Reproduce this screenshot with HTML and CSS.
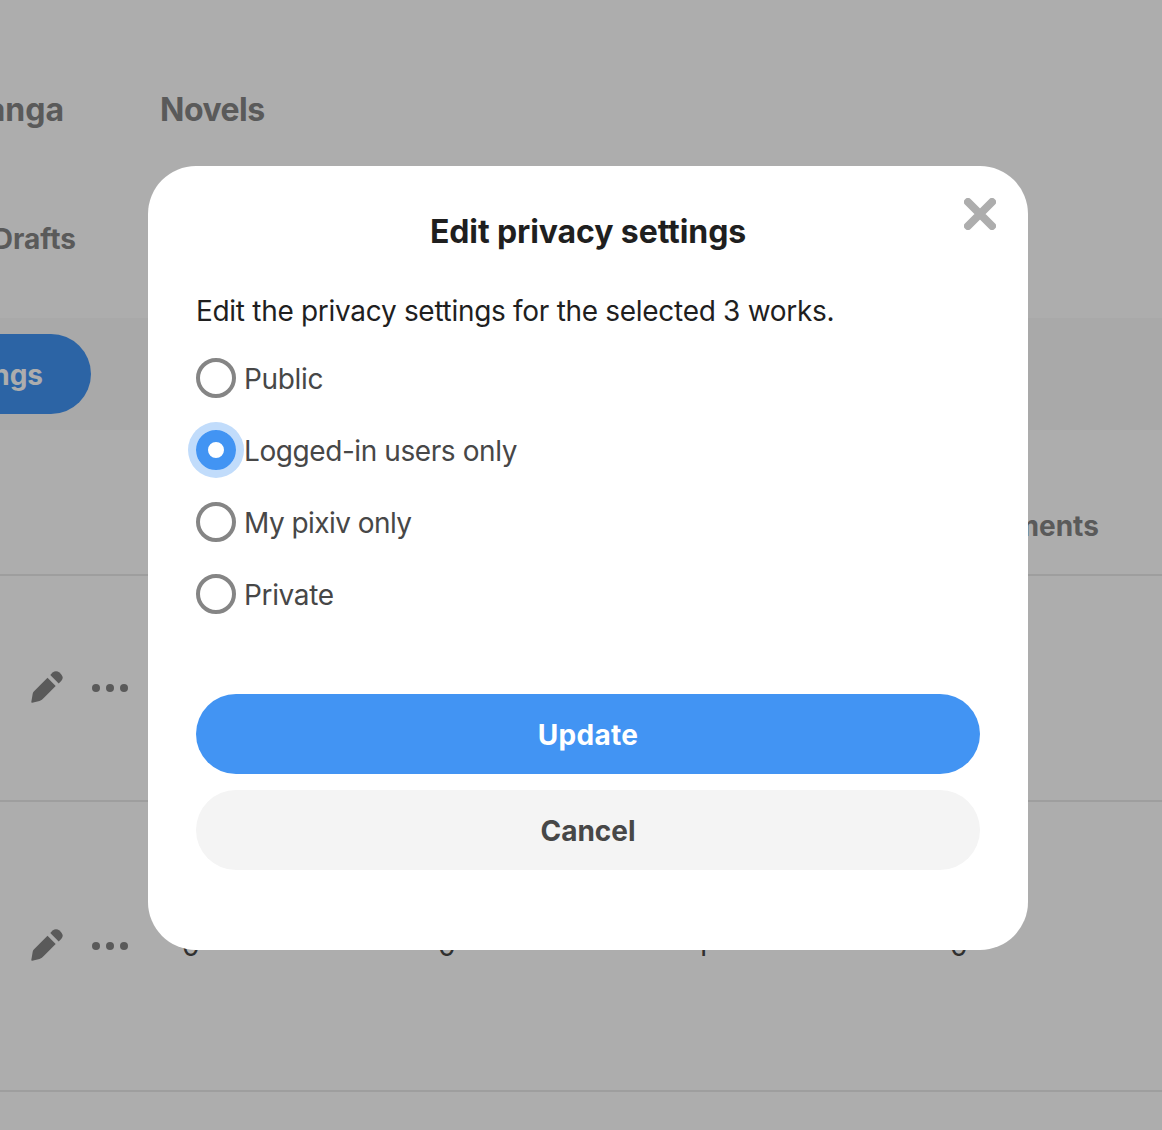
FILE: index.html
```html
<!DOCTYPE html>
<html lang="en">
<head>
    <meta charset="UTF-8">
    <meta name="viewport" content="width=device-width, initial-scale=1.0">
    <title>Edit privacy settings</title>
    <link rel="stylesheet" href="styles.css">
</head>
<body>
    <div class="page">
        <nav class="tabs">
            <a class="tab tab-first">Manga</a>
            <a class="tab tab-novels">Novels</a>
        </nav>
        <div class="filters"><a class="drafts">Drafts</a></div>
        <div class="toolbar">
            <button class="settings-button">Privacy settings</button>
        </div>

        <div class="row row-head">
            <div class="actions"></div>
            <div class="cell"></div>
            <div class="cell"></div>
            <div class="cell"></div>
            <div class="cell comments">Comments</div>
        </div>
        <div class="row row-first">
            <div class="actions">
                <svg class="pencil" viewBox="0 0 32 32">
                    <path d="M16.5 6.7 24.7 15 13 26.8Q11 29 8.5 30L1.2 31.8Q.3 32 .3 31L1.7 22.8Q1.9 21.5 2.8 20.6Z"/>
                    <path d="M19.3 4 21.6 1.6Q25-1.3 28.5 1.6L30.3 3.5Q33.2 7 30.2 10L27.7 12.4Z"/>
                </svg>
                <svg class="dots" viewBox="0 0 36 8"><circle cx="4" cy="4" r="4"/><circle cx="18" cy="4" r="4"/><circle cx="32" cy="4" r="4"/></svg>
            </div>
        </div>
        <div class="row row-second">
            <div class="actions">
                <svg class="pencil" viewBox="0 0 32 32">
                    <path d="M16.5 6.7 24.7 15 13 26.8Q11 29 8.5 30L1.2 31.8Q.3 32 .3 31L1.7 22.8Q1.9 21.5 2.8 20.6Z"/>
                    <path d="M19.3 4 21.6 1.6Q25-1.3 28.5 1.6L30.3 3.5Q33.2 7 30.2 10L27.7 12.4Z"/>
                </svg>
                <svg class="dots" viewBox="0 0 36 8"><circle cx="4" cy="4" r="4"/><circle cx="18" cy="4" r="4"/><circle cx="32" cy="4" r="4"/></svg>
            </div>
            <div class="cell">0</div>
            <div class="cell">0</div>
            <div class="cell cell-one">1</div>
            <div class="cell">0</div>
        </div>
    </div>

    <div class="overlay">
        <div class="modal" role="dialog">
            <button class="close" aria-label="Close">
                <svg viewBox="0 0 32 32"><path d="M4 4 28 28M28 4 4 28"/></svg>
            </button>
            <h1>Edit privacy settings</h1>
            <p class="description">Edit the privacy settings for the selected 3 works.</p>
            <div class="options">
                <label><input type="radio" name="privacy"><span>Public</span></label>
                <label><input type="radio" name="privacy" checked><span class="text-users">Logged-in users only</span></label>
                <label><input type="radio" name="privacy"><span class="text-mypixiv">My pixiv only</span></label>
                <label><input type="radio" name="privacy"><span>Private</span></label>
            </div>
            <div class="buttons">
                <button class="update">Update</button>
                <button class="cancel">Cancel</button>
            </div>
        </div>
    </div>
</body>
</html>
```
FILE: styles.css
```css
* {
    box-sizing: border-box;
}

body {
    margin: 0;
    height: 1130px;
    overflow: hidden;
    background-color: #fff;
    font-family: Inter, "Liberation Sans", sans-serif;
    font-size: 28px;
    color: #474747;
}

button {
    border: none;
    padding: 0;
    font-family: inherit;
    font-size: 28px;
    font-weight: bold;
    cursor: pointer;
}

.page {
    height: 1130px;
    overflow: hidden;
}

.tabs {
    display: flex;
    align-items: center;
    height: 158px;
    padding-top: 60px;
    font-size: 32px;
    font-weight: bold;
    color: #858585;
}

.tab-first {
    display: flex;
    justify-content: flex-end;
    width: 64px;
}

.tab-novels {
    margin-left: 96px;
    letter-spacing: -0.5px;
}

.filters {
    display: flex;
    align-items: center;
    height: 160px;
    padding-top: 1px;
    font-weight: bold;
    color: #858585;
}

.drafts {
    display: flex;
    justify-content: flex-end;
    width: 76px;
}

.toolbar {
    display: flex;
    align-items: center;
    height: 112px;
    background-color: #f9f9f9;
}

.settings-button {
    flex-shrink: 0;
    width: 320px;
    height: 80px;
    margin-left: -229px;
    padding: 1px 48px 0 0;
    border-radius: 40px;
    background-color: #4294f3;
    color: #fff;
    text-align: right;
}

.row {
    display: flex;
    align-items: center;
    border-bottom: 2px solid #e9e9e9;
}

.row-head {
    height: 146px;
    padding-bottom: 48px;
    align-items: flex-end;
    font-weight: bold;
    line-height: 0;
    color: #858585;
}

.row-first {
    height: 226px;
}

.row-second {
    height: 290px;
}

.actions {
    display: flex;
    align-items: center;
    flex-shrink: 0;
    width: 182px;
    padding-left: 31px;
    fill: #858585;
}

.pencil {
    width: 32px;
    height: 32px;
    margin: 0 29px 2px 0;
}

.dots {
    width: 36px;
    height: 8px;
}

.cell {
    flex-shrink: 0;
    width: 256px;
}

.cell-one {
    padding-left: 2px;
}

.overlay {
    position: fixed;
    inset: 0;
    padding: 166px 0 0 148px;
    background-color: rgba(0, 0, 0, 0.32);
}

.modal {
    position: relative;
    width: 880px;
    height: 784px;
    padding: 42px 48px 0;
    border-radius: 48px;
    background-color: #fff;
}

.close {
    position: absolute;
    top: 32px;
    right: 32px;
    width: 32px;
    height: 32px;
    background: none;
}

.close svg {
    display: block;
    fill: none;
    stroke: #adadad;
    stroke-width: 8;
    stroke-linecap: round;
}

h1 {
    margin: 0;
    font-size: 32px;
    line-height: 48px;
    letter-spacing: -0.1px;
    text-align: center;
    color: #1f1f1f;
}

.description {
    margin: 33px 0 0;
    line-height: 44px;
    letter-spacing: -0.3px;
    white-space: nowrap;
    color: #1f1f1f;
}

.options {
    display: flex;
    flex-direction: column;
    gap: 32px;
    margin-top: 25px;
}

.options label {
    display: flex;
    align-items: center;
    gap: 8px;
    height: 40px;
}

.options span {
    padding-top: 1px;
    letter-spacing: -0.35px;
}

.options .text-users {
    letter-spacing: -0.42px;
}

.options .text-mypixiv {
    letter-spacing: -0.55px;
}

input[type="radio"] {
    appearance: none;
    width: 40px;
    height: 40px;
    margin: 0;
    border: 4px solid #858585;
    border-radius: 50%;
}

input[type="radio"]:checked {
    border: 12px solid #4294f3;
    box-shadow: 0 0 0 8px #c1dcfb;
}

.buttons {
    display: flex;
    flex-direction: column;
    gap: 16px;
    margin-top: 80px;
}

.buttons button {
    height: 80px;
    padding-top: 1px;
    border-radius: 40px;
}

.update {
    background-color: #4294f3;
    color: #fff;
    letter-spacing: 0.3px;
}

.cancel {
    background-color: #f4f4f4;
    color: #474747;
}
```
